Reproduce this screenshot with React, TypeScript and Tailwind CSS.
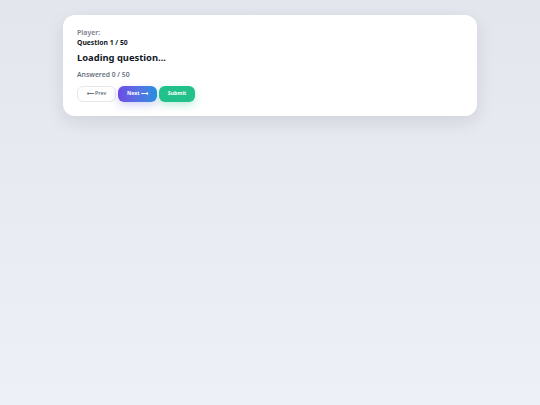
import React from "react";

export default function App() {
  return (
    <div
      className="min-h-[405px] w-full bg-gradient-to-b from-[#e4e6ed] to-[#eef0f7] pt-[15px]"
      style={{ fontFamily: '"Noto Sans", "Open Sans", sans-serif' }}
    >
      <div className="mx-auto w-[414px] rounded-[12px] bg-white px-[14px] pt-[13px] pb-[14px] shadow-[0_6px_18px_rgba(15,23,42,0.10)]">
        <div className="text-[7px] font-semibold leading-[10px] text-[#7b808a]">Player:</div>
        <div className="text-[6.8px] font-bold leading-[10px] text-[#111827]">Question 1 / 50</div>
        <h2 className="mt-[4px] text-[9.4px] font-bold leading-[12px] text-[#111827]">Loading question...</h2>
        <div className="mt-[6px] text-[6.8px] font-semibold leading-[10px] text-[#6b7280]">Answered 0 / 50</div>
        <div className="mt-[6px] flex items-center gap-[2px]">
          <button className="h-[16px] w-[39px] rounded-[6px] border border-[#e5e7eb] bg-white text-[5.2px] font-semibold text-[#6b7280]">
            ⟵ Prev
          </button>
          <button className="h-[16px] w-[39px] rounded-[6px] bg-gradient-to-r from-[#6d4ae6] to-[#1f8fe0] text-[5.2px] font-bold text-white shadow-[0_3px_8px_rgba(79,70,229,0.25)]">
            Next ⟶
          </button>
          <button className="h-[16px] w-[36px] rounded-[6px] bg-[#22c08a] text-[5.2px] font-bold text-white shadow-[0_3px_8px_rgba(34,192,138,0.3)]">
            Submit
          </button>
        </div>
      </div>
    </div>
  );
}
